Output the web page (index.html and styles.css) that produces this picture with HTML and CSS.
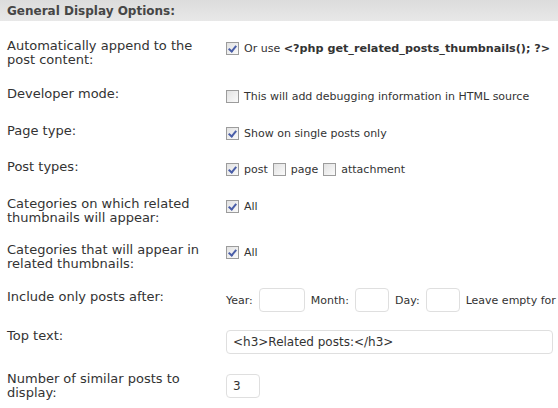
FILE: index.html
```html
<!DOCTYPE html>
<html>
<head>
<meta charset="utf-8">
<link rel="stylesheet" href="styles.css">
</head>
<body>
<div class="header">General Display Options:</div>
<div class="form">
  <div class="row r1">
    <div class="label">Automatically append to the<br>post content:</div>
    <div class="ctrl"><span class="cb on"></span><span>Or use <b>&lt;?php get_related_posts_thumbnails(); ?&gt;</b></span></div>
  </div>
  <div class="row r2">
    <div class="label">Developer mode:</div>
    <div class="ctrl"><span class="cb"></span><span>This will add debugging information in HTML source</span></div>
  </div>
  <div class="row r3">
    <div class="label">Page type:</div>
    <div class="ctrl"><span class="cb on"></span><span>Show on single posts only</span></div>
  </div>
  <div class="row r4">
    <div class="label">Post types:</div>
    <div class="ctrl"><span class="cb on"></span><span>post</span><span class="cb"></span><span>page</span><span class="cb"></span><span>attachment</span></div>
  </div>
  <div class="row r5">
    <div class="label">Categories on which related<br>thumbnails will appear:</div>
    <div class="ctrl"><span class="cb on"></span><span>All</span></div>
  </div>
  <div class="row r6">
    <div class="label">Categories that will appear in<br>related thumbnails:</div>
    <div class="ctrl"><span class="cb on"></span><span>All</span></div>
  </div>
  <div class="row r7">
    <div class="label">Include only posts after:</div>
    <div class="ctrl inputs"><span>Year:</span><span class="inp w46"></span><span>Month:</span><span class="inp w34"></span><span>Day:</span><span class="inp w34"></span><span class="note">Leave empty for</span></div>
  </div>
  <div class="row r8">
    <div class="label">Top text:</div>
    <div class="ctrl"><span class="inp wide">&lt;h3&gt;Related posts:&lt;/h3&gt;</span></div>
  </div>
  <div class="row r9">
    <div class="label">Number of similar posts to<br>display:</div>
    <div class="ctrl"><span class="inp w34">3</span></div>
  </div>
</div>
</body>
</html>
```
FILE: styles.css
```css
html, body {
  margin: 0;
  padding: 0;
  background: #fff;
  width: 558px;
  height: 408px;
  overflow: hidden;
}
body {
  font-family: "DejaVu Sans", Verdana, sans-serif;
  color: #333;
}
.header {
  height: 21px;
  box-sizing: border-box;
  padding: 4px 0 0 7px;
  background: linear-gradient(#dcdcdc, #e8e8e8);
  font-weight: bold;
  font-size: 12px;
  line-height: 14px;
  color: #464646;
}
.form {
  padding-top: 19px;
}
.row {
  display: grid;
  grid-template-columns: 219px 1fr;
  padding-left: 7px;
  align-items: start;
}
.r1 { height: 48px; }
.r2 { height: 37px; }
.r3 { height: 36px; }
.r4 { height: 37px; }
.r5 { height: 46px; }
.r6 { height: 47px; }
.r7 { height: 39px; }
.r8 { height: 43px; }
.label {
  font-size: 13px;
  line-height: 14px;
  margin-top: -1px;
  color: #333;
}
.ctrl {
  display: flex;
  align-items: center;
  gap: 5px;
  font-size: 11px;
  line-height: 13px;
  padding-top: 2px;
  color: #333;
  white-space: nowrap;
}
.ctrl b { font-size: 11.2px; }
.cb {
  width: 11px;
  height: 11px;
  border: 1px solid #9c9c9c;
  background: linear-gradient(135deg, #e2e2e2, #fafafa);
  flex: none;
  position: relative;
}
.cb.on::after {
  content: "";
  position: absolute;
  left: 3px;
  top: 1px;
  width: 3px;
  height: 6px;
  border: solid #4a5ea8;
  border-width: 0 2px 2px 0;
  transform: rotate(40deg);
}
.inputs { margin-top: -5px; gap: 6px; }
.inp {
  display: flex;
  align-items: center;
  box-sizing: border-box;
  height: 24px;
  border: 1px solid #dfdfdf;
  border-radius: 4px;
  background: #fff;
  padding: 0 6px;
  font-size: 12px;
  color: #333;
}
.w46 { width: 46px; }
.w34 { width: 34px; }
.wide { width: 327px; }
.r8 .ctrl, .r9 .ctrl { padding-top: 0; }
.r9 .ctrl { margin-top: 1px; }
.note { font-size: 11px; }
```
